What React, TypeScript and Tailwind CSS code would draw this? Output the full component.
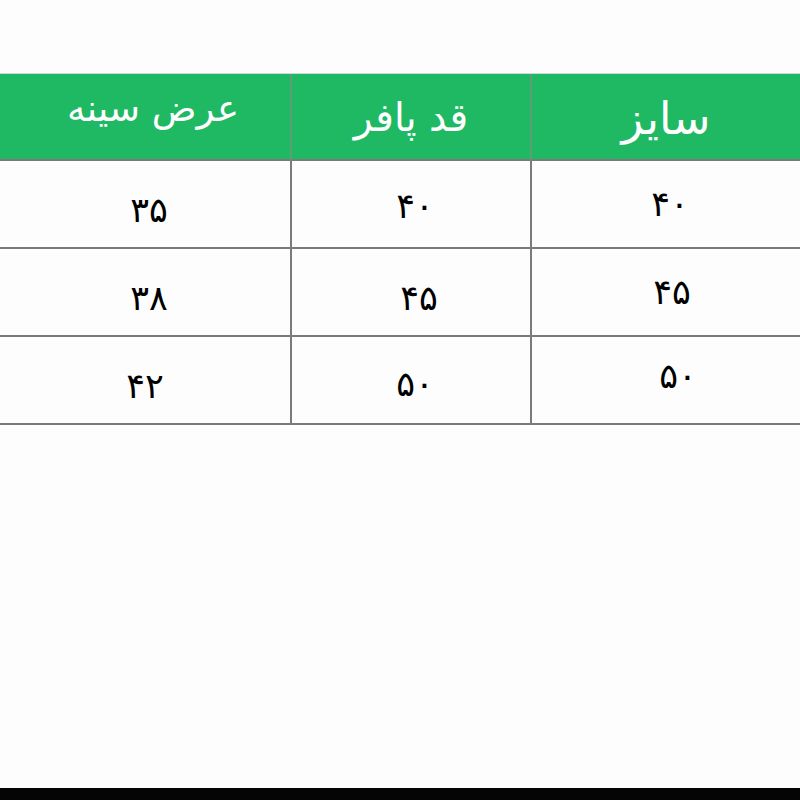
const HEADERS = [
  { label: "عرض سینه", size: "text-[37px]", pad: "pb-4 pl-4" },
  { label: "قد پافر", size: "text-[39px]", pad: "pt-1" },
  { label: "سایز", size: "text-[45px]", pad: "pt-1" },
];

// [value, extra classes to nudge like the original]
const ROWS: [string, string][][] = [
  [["۳۵", "pt-3 pl-2"], ["۴۰", "pt-1 pl-2"], ["۴۰", "pl-2"]],
  [["۳۸", "pt-3 pl-2"], ["۴۵", "pt-3 pl-4"], ["۴۵", "pl-3"]],
  [["۴۲", "pt-3"], ["۵۰", "pt-2 pl-2"], ["۵۰", "pb-2 pl-6"]],
];

export default function App() {
  return (
    <div className="relative h-[800px] w-[800px] overflow-hidden bg-[#fdfdfd] font-['DejaVu_Sans',sans-serif]">
      <div className="pt-[73px]">
        <div className="grid grid-cols-[290px_240px_270px] border-t border-[#cfd8d2]">
          {HEADERS.map((h, i) => (
            <div
              key={h.label}
              dir="rtl"
              className={`flex h-[87px] items-center justify-center bg-[#1fb964] text-white ${h.size} ${h.pad} ${
                i > 0 ? "border-l-2 border-[#5f9c78]" : ""
              } border-b-2 border-b-[#7a7a7a]`}
            >
              {h.label}
            </div>
          ))}
          {ROWS.map((row, r) =>
            row.map(([val, nudge], c) => (
              <div
                key={`${r}-${c}`}
                dir="rtl"
                className={`flex h-[88px] items-center justify-center text-[35px] text-black ${nudge} ${
                  c > 0 ? "border-l-2 border-[#7a7a7a]" : ""
                } border-b-2 border-b-[#7a7a7a]`}
              >
                {val}
              </div>
            ))
          )}
        </div>
      </div>
      <div className="absolute bottom-0 left-0 h-[12px] w-full bg-[#050505]" />
    </div>
  );
}
